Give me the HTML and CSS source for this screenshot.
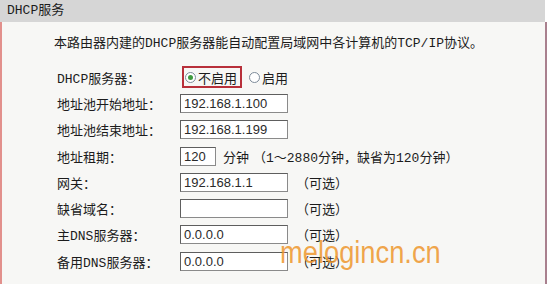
FILE: index.html
```html
<!DOCTYPE html>
<html lang="zh-CN">
<head>
    <meta charset="UTF-8">
    <title>DHCP服务</title>
    <link rel="stylesheet" href="styles.css">
</head>
<body>
    <div class="panel">
        <div class="title">DHCP服务</div>
        <div class="content">
            <p class="intro">本路由器内建的DHCP服务器能自动配置局域网中各计算机的TCP/IP协议。</p>
            <div class="form">
                <div class="label">DHCP服务器：</div>
                <div class="field">
                    <span class="choice selected"><span class="radio checked"></span>不启用</span>
                    <span class="choice"><span class="radio"></span>启用</span>
                </div>

                <div class="label">地址池开始地址：</div>
                <div class="field"><span class="input">192.168.1.100</span></div>

                <div class="label">地址池结束地址：</div>
                <div class="field"><span class="input">192.168.1.199</span></div>

                <div class="label">地址租期：</div>
                <div class="field"><span class="input short">120</span><span class="unit">分钟</span><span class="hint">（1～2880分钟，缺省为120分钟）</span></div>

                <div class="label">网关：</div>
                <div class="field"><span class="input">192.168.1.1</span><span class="hint">（可选）</span></div>

                <div class="label">缺省域名：</div>
                <div class="field"><span class="input"></span><span class="hint">（可选）</span></div>

                <div class="label">主DNS服务器：</div>
                <div class="field"><span class="input">0.0.0.0</span><span class="hint">（可选）</span></div>

                <div class="label">备用DNS服务器：</div>
                <div class="field"><span class="input">0.0.0.0</span><span class="hint">（可选）</span></div>
            </div>
            <div class="mark">melogincn.cn</div>
        </div>
    </div>
</body>
</html>
```

FILE: styles.css
```css
* {
    margin: 0;
    padding: 0;
    box-sizing: border-box;
}

body {
    background-color: #ffffff;
    color: #1c1c1c;
    font-family: "Liberation Mono", "Noto Sans CJK SC", monospace;
    font-size: 13px;
    width: 552px;
    height: 284px;
    overflow: hidden;
}

.panel {
    width: 547px;
}

.title {
    height: 22px;
    line-height: 22px;
    background-color: #d6d6d6;
    padding-left: 7px;
    font-size: 13px;
    width: 545px;
}

.content {
    position: relative;
    height: 262px;
    background-color: #f7f7f5;
    border-left: 2px solid #e2908c;
    border-right: 2px solid #a9808e;
}

.intro {
    padding-top: 12px;
    padding-left: 52px;
    line-height: 20px;
    white-space: nowrap;
}

.form {
    display: grid;
    grid-template-columns: 123px auto;
    grid-auto-rows: 26.3px;
    align-items: center;
    margin-top: 10px;
    padding-left: 55px;
}

.label {
    white-space: nowrap;
}

.field {
    display: flex;
    align-items: center;
    white-space: nowrap;
}

.input {
    display: inline-block;
    width: 108px;
    height: 19px;
    line-height: 17px;
    border: 1px solid #5e5e5e;
    border-right-color: #8a8a8a;
    border-bottom-color: #8a8a8a;
    background-color: #ffffff;
    padding: 0 3px;
    font-family: "Liberation Sans", Arial, sans-serif;
    font-size: 13px;
    color: #2a2a2a;
}

.input.short {
    width: 36px;
}

.unit {
    margin-left: 7px;
}

.hint {
    margin-left: 8px;
}

.input.short + .unit + .hint {
    margin-left: 4px;
}

.choice {
    display: inline-flex;
    align-items: center;
    height: 22px;
    padding: 0 3px 0 1px;
    border: 2px solid transparent;
    margin-left: 2px;
}

.choice.selected {
    border-color: #b8303a;
}

.choice + .choice {
    margin-left: 4px;
}

.radio {
    display: inline-block;
    position: relative;
    width: 11px;
    height: 11px;
    margin-right: 2px;
    border: 1px solid #7d8b99;
    border-radius: 50%;
    background-color: #ffffff;
}

.radio.checked::after {
    content: "";
    position: absolute;
    left: 2px;
    top: 2px;
    width: 5px;
    height: 5px;
    border-radius: 50%;
    background-color: #3e9a3e;
}

.mark {
    position: absolute;
    left: 278px;
    top: 215px;
    font-family: "Liberation Sans", Arial, sans-serif;
    font-size: 31px;
    line-height: 31px;
    color: rgba(238, 150, 44, 0.85);
    transform: scaleX(0.88);
    transform-origin: left center;
    white-space: nowrap;
}
```
